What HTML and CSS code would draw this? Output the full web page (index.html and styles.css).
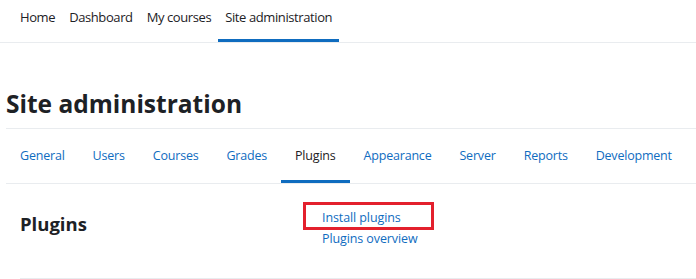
FILE: index.html
```html
<!DOCTYPE html>
<html lang="en">
<head>
    <meta charset="UTF-8">
    <title>Site administration</title>
    <link rel="stylesheet" href="styles.css">
</head>
<body>
    <nav class="topnav">
        <a class="topnav-item" href="#">Home</a>
        <a class="topnav-item" href="#">Dashboard</a>
        <a class="topnav-item" href="#">My courses</a>
        <a class="topnav-item active" href="#">Site administration</a>
    </nav>

    <div class="page">
        <h1 class="page-title">Site administration</h1>

        <ul class="tabs">
            <li><a class="tab" href="#">General</a></li>
            <li><a class="tab" href="#">Users</a></li>
            <li><a class="tab" href="#">Courses</a></li>
            <li><a class="tab" href="#">Grades</a></li>
            <li><a class="tab active" href="#">Plugins</a></li>
            <li><a class="tab" href="#">Appearance</a></li>
            <li><a class="tab" href="#">Server</a></li>
            <li><a class="tab" href="#">Reports</a></li>
            <li><a class="tab" href="#">Development</a></li>
        </ul>

        <div class="section">
            <h2 class="section-title">Plugins</h2>
            <ul class="section-links">
                <li class="highlight"><a href="#">Install plugins</a></li>
                <li><a href="#">Plugins overview</a></li>
            </ul>
        </div>
    </div>
</body>
</html>
```

FILE: styles.css
```css
body {
    margin: 0;
    font-family: "Open Sans", "Noto Sans", sans-serif;
    color: #1d2125;
    background-color: #fff;
}
a {
    text-decoration: none;
}
ul {
    list-style: none;
    margin: 0;
    padding: 0;
}

.topnav {
    display: flex;
    height: 42px;
    padding-left: 13px;
    border-bottom: 1px solid #e9ecef;
}
.topnav-item {
    display: flex;
    align-items: center;
    padding: 0 7px 6px;
    font-size: 13px;
    letter-spacing: -0.4px;
    color: #1d2125;
    border-bottom: 3px solid transparent;
}
.topnav-item.active {
    border-bottom-color: #0f6cbf;
}

.page {
    padding-left: 6px;
}
.page-title {
    margin: 0;
    padding: 40px 0 4px;
    height: 41px;
    font-size: 24.5px;
    font-weight: 700;
    line-height: 41px;
    border-bottom: 1px solid #e9ecef;
}

.tabs {
    display: flex;
    border-bottom: 1px solid #e9ecef;
}
.tab {
    display: block;
    padding: 15px 14px 13px;
    font-size: 12.5px;
    letter-spacing: -0.2px;
    line-height: 23px;
    color: #0f6cbf;
    border-bottom: 3px solid transparent;
}
.tab.active {
    color: #1d2125;
    border-bottom-color: #0f6cbf;
}

.section {
    display: flex;
    margin-left: 14px;
    padding-top: 18px;
    height: 76px;
    border-bottom: 1px solid #e9ecef;
}
.section-title {
    width: 283px;
    margin: 0;
    padding-top: 9px;
    font-size: 18.5px;
    font-weight: 700;
    line-height: 26px;
}
.section-links li {
    padding-left: 19px;
    font-size: 12.5px;
    letter-spacing: -0.1px;
    line-height: 18px;
}
.section-links li a {
    color: #0f6cbf;
}
.section-links li.highlight {
    width: 108px;
    padding: 4px 1px 0 16px;
    border: 3px solid #e3202d;
}
```
